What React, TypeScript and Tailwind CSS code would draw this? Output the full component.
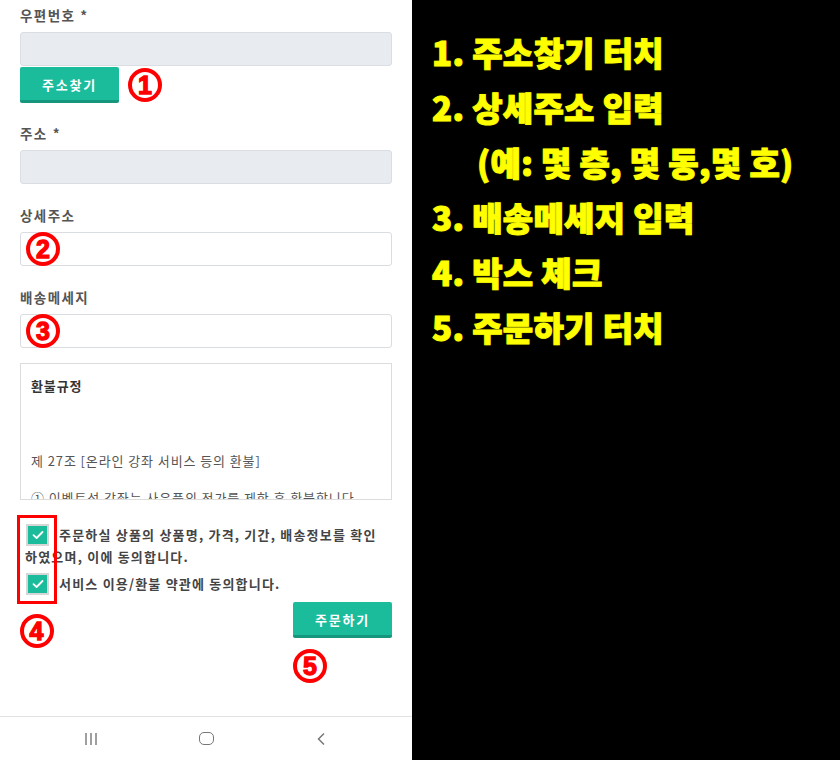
import React from 'react';

const Num: React.FC<{ n: string }> = ({ n }) => (
  <div className="w-[34px] h-[34px] rounded-full border-[4px] border-[#f00] flex items-center justify-center text-[#f00] text-[25px] font-black leading-none [-webkit-text-stroke:1.3px_#f00] [font-family:'Liberation_Sans',Arial,sans-serif]">
    {n}
  </div>
);

const Label: React.FC<{ text: string; star?: boolean; className?: string }> = ({ text, star, className }) => (
  <div className={`text-[13.5px] leading-[19px] font-bold text-[#555] tracking-[1.4px] mb-[7px] ${className ?? ''}`}>
    {text}
    {star && <span className="ml-[5px]">*</span>}
  </div>
);

const Check: React.FC = () => (
  <span className="inline-flex align-top items-center justify-center w-[23px] h-[22px] ml-px mr-[10px] border-2 border-[#d6d6d6] bg-[#1abc9c]">
    <svg width="12" height="10" viewBox="0 0 12 10" fill="none">
      <path d="M1.5 5.2 L4.6 8 L10.5 2" stroke="#fff" strokeWidth="1.8" strokeLinecap="round" strokeLinejoin="round" />
    </svg>
  </span>
);

const steps = [
  { text: '1. 주소찾기 터치', indent: false },
  { text: '2. 상세주소 입력', indent: false },
  { text: '(예: 몇 층, 몇 동,몇 호)', indent: true },
  { text: '3. 배송메세지 입력', indent: false },
  { text: '4. 박스 체크', indent: false },
  { text: '5. 주문하기 터치', indent: false },
];

export default function App() {
  return (
    <div className="w-[840px] h-[760px] flex bg-black overflow-hidden [font-family:'Noto_Sans_CJK_KR','Noto_Sans',sans-serif]">
      {/* phone screen */}
      <div className="w-[412px] h-full bg-white flex flex-col">
        <div className="px-[20px] pt-[6px] flex flex-col">
          <Label text="우편번호" star />
          <div className="h-[34px] w-[372px] bg-[#e8ebef] border border-[#dadde2] rounded-[3px]" />
          <div className="flex items-center mt-px">
            <button className="w-[99px] h-[36px] bg-[#1abc9c] border-b-[3px] border-[#15967d] rounded-[2px] text-white text-[13px] font-bold tracking-[1.8px] pt-[2px]">
              주소찾기
            </button>
            <div className="ml-[9px]">
              <Num n="1" />
            </div>
          </div>

          <Label text="주소" star className="mt-[21px]" />
          <div className="h-[34px] w-[372px] bg-[#e8ebef] border border-[#dadde2] rounded-[3px]" />

          <Label text="상세주소" className="mt-[22px]" />
          <div className="h-[34px] w-[372px] bg-white border border-[#d9dce1] rounded-[3px] flex items-center pl-[5px]">
            <Num n="2" />
          </div>

          <Label text="배송메세지" className="mt-[22px]" />
          <div className="h-[34px] w-[372px] bg-white border border-[#d9dce1] rounded-[3px] flex items-center pl-[5px]">
            <Num n="3" />
          </div>

          <div className="mt-[15px] h-[137px] w-[372px] border border-[#dcdcdc] overflow-hidden px-[10px] pt-[12px] text-[13px] leading-[19px] text-[#555] tracking-[0.9px]">
            <p className="font-bold text-[#333]">환불규정</p>
            <p className="mt-[56px]">제 27조 [온라인 강좌 서비스 등의 환불]</p>
            <p className="mt-[18px] whitespace-nowrap">① 이벤트성 강좌는 사은품의 정가를 제한 후 환불합니다.</p>
          </div>

          <div className="relative mt-[24px] pl-[5px] text-[13px] leading-[21px] font-bold text-[#444] tracking-[1.2px]">
            <p>
              <Check />
              주문하실 상품의 상품명, 가격, 기간, 배송정보를 확인 하였으며, 이에 동의합니다.
            </p>
            <p className="mt-[6px]">
              <Check />
              서비스 이용/환불 약관에 동의합니다.
            </p>
            <div className="absolute left-[-3px] top-[-9px] w-[40px] h-[89px] border-[3px] border-[#f00]" />
            <div className="absolute left-0 top-[90px]">
              <Num n="4" />
            </div>
          </div>

          <div className="flex flex-col items-end mt-[7px]">
            <button className="w-[99px] h-[36px] bg-[#1abc9c] border-b-[3px] border-[#15967d] rounded-[2px] text-white text-[13px] font-bold tracking-[1.8px] pt-[2px]">
              주문하기
            </button>
            <div className="w-[99px] mt-[11px]">
              <Num n="5" />
            </div>
          </div>
        </div>

        {/* android nav bar */}
        <div className="mt-auto h-[44px] border-t border-[#e2e2e2] flex justify-center items-center">
          <div className="w-[115px] flex justify-center">
            <svg width="14" height="14" viewBox="0 0 14 14">
              <path d="M2 1v12M7 1v12M12 1v12" stroke="#777" strokeWidth="1.4" />
            </svg>
          </div>
          <div className="w-[115px] flex justify-center">
            <div className="w-[15px] h-[13px] rounded-[5px] border-[1.5px] border-[#777]" />
          </div>
          <div className="w-[115px] flex justify-center">
            <svg width="10" height="14" viewBox="0 0 10 14">
              <path d="M8 1.5 L2.5 7 L8 12.5" stroke="#777" strokeWidth="1.5" fill="none" />
            </svg>
          </div>
        </div>
      </div>

      {/* instructions */}
      <div className="flex-1 pl-[20px] pt-[25px] flex flex-col">
        {steps.map((s) => (
          <div
            key={s.text}
            className={`text-[33px] leading-[55px] font-black text-[#ffff00] tracking-[0.3px] whitespace-nowrap [-webkit-text-stroke:1px_#ffff00] [text-shadow:0_0_2px_#555500] ${s.indent ? 'pl-[45px]' : ''}`}
          >
            {s.text}
          </div>
        ))}
      </div>
    </div>
  );
}
